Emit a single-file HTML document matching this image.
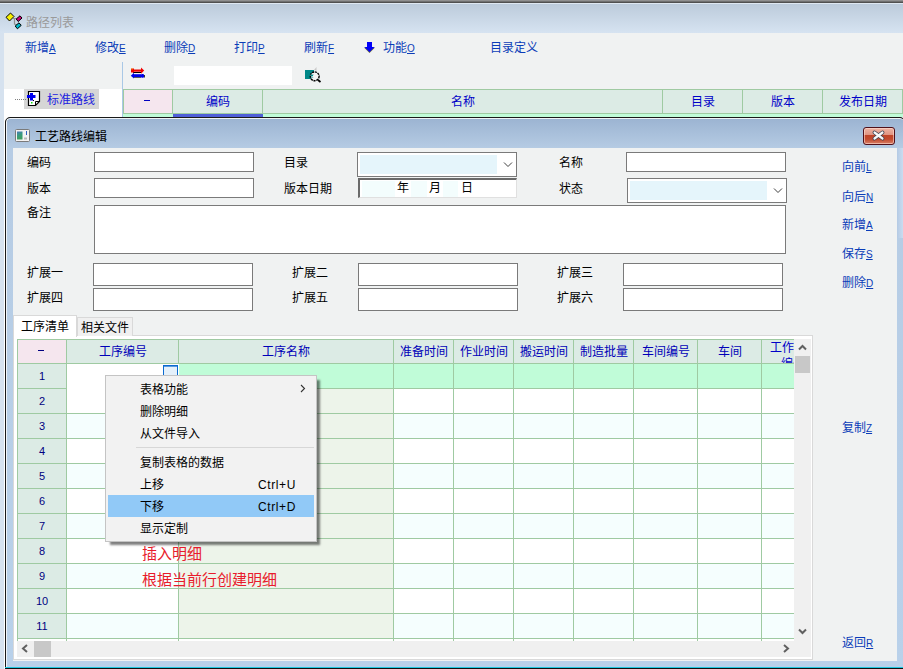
<!DOCTYPE html>
<html lang="zh-CN">
<head>
<meta charset="utf-8">
<style>
*{margin:0;padding:0;box-sizing:border-box}
html,body{width:903px;height:669px;overflow:hidden;background:#f0f2f2;font-family:"Liberation Sans",sans-serif;font-size:12px;line-height:12px;color:#000}
.a{position:absolute}
.t{position:absolute;white-space:nowrap;font-size:12px;line-height:16px}
.lk{color:#0a3cb8}
.u{text-decoration:underline;font-size:10px}
.inp{position:absolute;background:#fff;border:1px solid #7a7a7a}
.lbl{position:absolute;white-space:nowrap;font-size:12px;line-height:16px;color:#000}
.hd{position:absolute;background:#dcebe5;border-right:1px solid #9fcaa2;border-bottom:1px solid #9fcaa2;color:#0000c8;text-align:center;font-size:12px}
</style>
</head>
<body>
<!-- main window top border -->
<div class="a" style="left:0;top:0;width:903px;height:3px;background:linear-gradient(#a0a0a0,#404040)"></div>
<div class="a" style="left:0;top:3px;width:903px;height:1px;background:#dfe8f2"></div>
<div class="a" style="left:0;top:4px;width:903px;height:29px;background:linear-gradient(#bccbdb,#d6e3f1)"></div>
<div class="a" style="left:0;top:33px;width:4px;height:636px;background:#d6e2ef"></div>

<!-- title icon -->
<svg class="a" style="left:0;top:0" width="30" height="33" viewBox="0 0 30 33">
 <path d="M13 18.5 H17 M14.5 18.5 V24 L17 25" stroke="#909090" stroke-width="1.2" fill="none"/>
 <path d="M6 17.3 L10.5 13 L14 16.5 L9.5 21 Z" fill="#f8f000" stroke="#000" stroke-width="1"/>
 <path d="M16.2 19 L20 15.8 L22 18 L18.2 21.5 Z" fill="#d0007a" stroke="#000" stroke-width="1"/>
 <path d="M15.2 26 L19 22.8 L21.2 25.4 L17.4 28.8 Z" fill="#00b8c8" stroke="#000" stroke-width="1"/>
</svg>
<div class="t" style="left:26px;top:15px;color:#9a9a9a">路径列表</div>

<!-- toolbar -->
<div class="t lk" style="left:25px;top:40px">新增<span class="u">A</span></div>
<div class="t lk" style="left:95px;top:40px">修改<span class="u">E</span></div>
<div class="t lk" style="left:164px;top:40px">删除<span class="u">D</span></div>
<div class="t lk" style="left:234px;top:40px">打印<span class="u">P</span></div>
<div class="t lk" style="left:304px;top:40px">刷新<span class="u">F</span></div>
<svg class="a" style="left:360px;top:36px" width="16" height="18" viewBox="0 0 16 18">
 <path d="M7 6.5 H12 V11.5 H15 L9.5 17 L4 11.5 H7 Z" fill="#404020" opacity="0.8"/>
 <path d="M7 6 H12 V11 H14.5 L9.5 16 L4.5 11 H7 Z" fill="#0000f8"/>
</svg>
<div class="t lk" style="left:383px;top:40px">功能<span class="u">O</span></div>
<div class="t lk" style="left:490px;top:40px">目录定义</div>

<!-- left tree panel -->
<div class="a" style="left:4px;top:89px;width:118px;height:580px;background:#fff"></div>
<div class="a" style="left:122px;top:62px;width:1px;height:607px;background:#a9c8e6"></div>
<div class="a" style="left:24px;top:89px;width:75px;height:20px;background:#d6d6d6"></div>
<div class="a" style="left:15px;top:99px;width:12px;height:1px;background:repeating-linear-gradient(90deg,#808080 0 1px,transparent 1px 2px)"></div>
<svg class="a" style="left:0;top:0" width="50" height="110" viewBox="0 0 50 110">
 <path d="M28.5 91.5 H39.5 V101.5 L35.5 105.5 H28.5 Z" fill="#fff" stroke="#000" stroke-width="1.2"/>
 <path d="M35.5 105.5 V101.5 H39.5" fill="none" stroke="#000" stroke-width="1"/>
 <rect x="27" y="95" width="8.5" height="3" fill="#0000f0"/>
 <rect x="30" y="93" width="3" height="7.5" fill="#0000f0"/>
 <rect x="33" y="100" width="1" height="1" fill="#000"/>
 <rect x="31" y="102" width="1.5" height="1.5" fill="#10e010"/>
</svg>
<div class="t" style="left:47px;top:92px;color:#2020e0">标准路线</div>

<!-- grid toolbar -->
<svg class="a" style="left:126px;top:62px" width="24" height="22" viewBox="0 0 24 22">
 <rect x="7" y="10" width="8" height="1" fill="#000"/>
 <rect x="5" y="7.5" width="11" height="2.2" fill="#f00000"/>
 <path d="M15 5.5 L18.2 8.6 L15 11.8 Z" fill="#f00000"/>
 <rect x="5" y="6.5" width="3" height="4" fill="#f00000"/>
 <rect x="5.5" y="6.5" width="1" height="1" fill="#f0f000"/>
 <rect x="7" y="12.2" width="8" height="3" fill="#0000e8"/>
 <path d="M8 10.8 L4.8 13.7 L8 16.6 Z" fill="#0000e8"/>
 <rect x="15" y="12" width="3" height="3.8" rx="1" fill="#0000e8"/>
 <rect x="18" y="13" width="0.8" height="2.5" fill="#000"/>
 <rect x="8" y="15.2" width="7" height="0.8" fill="#404040"/>
</svg>
<div class="a" style="left:174px;top:66px;width:118px;height:19px;background:#fff"></div>
<svg class="a" style="left:300px;top:62px" width="26" height="24" viewBox="0 0 26 24">
 <rect x="5" y="8" width="9" height="9" fill="#008888"/>
 <path d="M14 8 L16.5 5 V9 Z" fill="#c8c8c8"/>
 <circle cx="14.7" cy="14.3" r="4.4" fill="#f4f4f4" stroke="#000" stroke-width="1.4" stroke-dasharray="2.2 0.7"/>
 <path d="M10.5 12.5 L13 15.5 M10.8 15.5 L13.2 12.5" stroke="#008c8c" stroke-width="1.1"/>
 <path d="M18 18 L20.5 20" stroke="#000" stroke-width="1.8"/>
</svg>

<!-- main grid header -->
<div class="a" style="left:123px;top:89px;width:780px;height:1px;background:#9fcaa2"></div>
<div class="hd" style="left:123px;top:90px;width:50px;height:24px;background:#f5e6ee;line-height:22px;border-left:1px solid #9fcaa2"></div>
<div class="a" style="left:144px;top:100px;width:6px;height:1px;background:#0000c0"></div>
<div class="hd" style="left:173px;top:90px;width:90px;height:24px;line-height:24px">编码</div>
<div class="hd" style="left:263px;top:90px;width:400px;height:24px;line-height:24px">名称</div>
<div class="hd" style="left:663px;top:90px;width:80px;height:24px;line-height:24px">目录</div>
<div class="hd" style="left:743px;top:90px;width:80px;height:24px;line-height:24px">版本</div>
<div class="hd" style="left:823px;top:90px;width:80px;height:24px;line-height:24px">发布日期</div>
<div class="a" style="left:123px;top:114px;width:780px;height:3px;background:#c0fcd8"></div>
<div class="a" style="left:173px;top:114px;width:90px;height:3px;background:#4f5fd8"></div>

<!-- dialog -->
<div class="a" style="left:5px;top:117px;width:900px;height:560px;border:1px solid #1a1a1a;border-top-left-radius:5px;border-top-right-radius:5px;overflow:hidden;background:#1a1a1a">
 <div style="position:absolute;left:0;top:0;right:0;bottom:0;border-top:1px solid #eef3f8;border-left:1px solid #eef3f8;border-top-left-radius:4px;border-top-right-radius:4px;background:linear-gradient(#9cb4d2,#b6cce4 30px,#b9d1ea)"></div>
</div>
<div class="a" style="left:5px;top:667px;width:898px;height:1px;background:#20c8e0"></div>
<div class="a" style="left:5px;top:668px;width:898px;height:1px;background:#101010"></div>
<!-- dialog icon -->
<svg class="a" style="left:15px;top:129px" width="15" height="13" viewBox="0 0 15 13">
 <defs><linearGradient id="gi" x1="0" y1="0" x2="0.3" y2="1"><stop offset="0" stop-color="#4a78c0"/><stop offset="0.5" stop-color="#3a9a80"/><stop offset="1" stop-color="#40a060"/></linearGradient></defs>
 <rect x="0.5" y="0.5" width="14" height="12" rx="1" fill="#f4f2f2" stroke="#7a7a7a"/>
 <rect x="2" y="2.5" width="5.5" height="8" fill="url(#gi)"/>
 <rect x="11" y="2" width="1" height="4" fill="#3060c0"/>
 <rect x="9" y="8.5" width="3" height="2" fill="#b8b8b8"/>
</svg>
<div class="t" style="left:35px;top:129px;color:#000">工艺路线编辑</div>
<!-- close btn -->
<div class="a" style="left:863px;top:127px;width:32px;height:18px;border:1px solid #50101a;border-radius:3px;background:linear-gradient(#eeb4a4 0%,#e09482 42%,#c04428 46%,#c24a2e 70%,#d88068 100%);box-shadow:inset 0 0 0 1px rgba(255,220,210,0.6)"></div>
<svg class="a" style="left:871px;top:129px" width="15" height="13" viewBox="0 0 15 13"><path d="M3.5 3.5 L11.5 9.5 M11.5 3.5 L3.5 9.5" stroke="#3a4050" stroke-width="3.8" stroke-linecap="round"/><path d="M3.5 3.5 L11.5 9.5 M11.5 3.5 L3.5 9.5" stroke="#f8f8f8" stroke-width="2.2" stroke-linecap="round"/></svg>

<div class="a" style="left:897px;top:148px;width:6px;height:90px;background:linear-gradient(90deg,#b4cae4,#cadcf0)"></div>
<!-- client area -->
<div class="a" style="left:13px;top:148px;width:884px;height:513px;background:#f0f2f2"></div>


<!-- form -->
<div class="lbl" style="left:27px;top:155px">编码</div>
<div class="inp" style="left:94px;top:152px;width:160px;height:20px"></div>
<div class="lbl" style="left:284px;top:155px">目录</div>
<div class="a" style="left:357px;top:152px;width:160px;height:25px;border:1px solid #7a7a7a;background:#fff"></div>
<div class="a" style="left:360px;top:155px;width:137px;height:19px;background:#e5f5fb"></div>
<svg class="a" style="left:503px;top:161px" width="10" height="7" viewBox="0 0 10 7"><path d="M1 1.5 L5 5.5 L9 1.5" stroke="#404040" stroke-width="1" fill="none"/></svg>
<div class="lbl" style="left:559px;top:155px">名称</div>
<div class="inp" style="left:626px;top:152px;width:160px;height:20px"></div>

<div class="lbl" style="left:27px;top:181px">版本</div>
<div class="inp" style="left:94px;top:178px;width:160px;height:20px"></div>
<div class="lbl" style="left:284px;top:181px">版本日期</div>
<div class="a" style="left:358px;top:178px;width:159px;height:20px;background:#fff;border-top:2px solid #6a6a6a;border-left:2px solid #6a6a6a;border-right:1px solid #e0e0e0;border-bottom:1px solid #e0e0e0"></div>
<div class="a" style="left:362px;top:181px;width:33px;height:16px;background:#f3fdfd"></div>
<div class="a" style="left:411px;top:181px;width:16px;height:16px;background:#f3fdfd"></div>
<div class="a" style="left:443px;top:181px;width:15px;height:16px;background:#f3fdfd"></div>
<div class="lbl" style="left:397px;top:180px">年</div>
<div class="lbl" style="left:429px;top:180px">月</div>
<div class="lbl" style="left:461px;top:180px">日</div>
<div class="lbl" style="left:559px;top:181px">状态</div>
<div class="a" style="left:627px;top:178px;width:160px;height:25px;border:1px solid #7a7a7a;background:#fff"></div>
<div class="a" style="left:630px;top:181px;width:137px;height:19px;background:#e5f5fb"></div>
<svg class="a" style="left:773px;top:187px" width="10" height="7" viewBox="0 0 10 7"><path d="M1 1.5 L5 5.5 L9 1.5" stroke="#404040" stroke-width="1" fill="none"/></svg>

<div class="lbl" style="left:27px;top:205px">备注</div>
<div class="inp" style="left:94px;top:205px;width:692px;height:49px"></div>

<div class="lbl" style="left:27px;top:265px">扩展一</div>
<div class="inp" style="left:93px;top:263px;width:160px;height:23px"></div>
<div class="lbl" style="left:292px;top:265px">扩展二</div>
<div class="inp" style="left:358px;top:263px;width:160px;height:23px"></div>
<div class="lbl" style="left:557px;top:265px">扩展三</div>
<div class="inp" style="left:623px;top:263px;width:160px;height:23px"></div>
<div class="lbl" style="left:27px;top:290px">扩展四</div>
<div class="inp" style="left:93px;top:288px;width:160px;height:23px"></div>
<div class="lbl" style="left:292px;top:290px">扩展五</div>
<div class="inp" style="left:358px;top:288px;width:160px;height:23px"></div>
<div class="lbl" style="left:557px;top:290px">扩展六</div>
<div class="inp" style="left:623px;top:288px;width:160px;height:23px"></div>

<!-- right buttons -->
<div class="t lk" style="left:842px;top:159px">向前<span class="u">L</span></div>
<div class="t lk" style="left:842px;top:189px">向后<span class="u">N</span></div>
<div class="t lk" style="left:842px;top:217px">新增<span class="u">A</span></div>
<div class="t lk" style="left:842px;top:246px">保存<span class="u">S</span></div>
<div class="t lk" style="left:842px;top:275px">删除<span class="u">D</span></div>
<div class="t lk" style="left:842px;top:420px">复制<span class="u">Z</span></div>
<div class="t lk" style="left:842px;top:635px">返回<span class="u">R</span></div>

<!-- tabs -->
<div class="a" style="left:13px;top:335px;width:800px;height:325px;background:#fff;border:1px solid #d9d9d9"></div>
<div class="a" style="left:77px;top:317px;width:56px;height:19px;background:#f0f0f0;border:1px solid #d9d9d9;border-bottom:none"></div>
<div class="a" style="left:13px;top:315px;width:64px;height:22px;background:#fff;border:1px solid #d9d9d9;border-bottom:none"></div>
<div class="lbl" style="left:21px;top:319px">工序清单</div>
<div class="lbl" style="left:81px;top:320px">相关文件</div>


<!-- grid -->
<div class="a" style="left:17px;top:339px;width:49px;height:24px;background:#f5e6ee"></div>
<div class="a" style="left:66px;top:339px;width:112px;height:24px;background:#dcebe5"></div>
<div class="a" style="left:178px;top:339px;width:215px;height:24px;background:#dcebe5"></div>
<div class="a" style="left:393px;top:339px;width:60px;height:24px;background:#dcebe5"></div>
<div class="a" style="left:453px;top:339px;width:60px;height:24px;background:#dcebe5"></div>
<div class="a" style="left:513px;top:339px;width:60px;height:24px;background:#dcebe5"></div>
<div class="a" style="left:573px;top:339px;width:60px;height:24px;background:#dcebe5"></div>
<div class="a" style="left:633px;top:339px;width:64px;height:24px;background:#dcebe5"></div>
<div class="a" style="left:697px;top:339px;width:64px;height:24px;background:#dcebe5"></div>
<div class="a" style="left:761px;top:339px;width:33px;height:24px;background:#dcebe5"></div>
<div class="a" style="left:17px;top:363px;width:49px;height:25px;background:#dcebe5"></div>
<div class="a" style="left:66px;top:363px;width:112px;height:25px;background:#ffffff"></div>
<div class="a" style="left:178px;top:363px;width:215px;height:25px;background:#c0fcd8"></div>
<div class="a" style="left:393px;top:363px;width:60px;height:25px;background:#c0fcd8"></div>
<div class="a" style="left:453px;top:363px;width:60px;height:25px;background:#c0fcd8"></div>
<div class="a" style="left:513px;top:363px;width:60px;height:25px;background:#c0fcd8"></div>
<div class="a" style="left:573px;top:363px;width:60px;height:25px;background:#c0fcd8"></div>
<div class="a" style="left:633px;top:363px;width:64px;height:25px;background:#c0fcd8"></div>
<div class="a" style="left:697px;top:363px;width:64px;height:25px;background:#c0fcd8"></div>
<div class="a" style="left:761px;top:363px;width:33px;height:25px;background:#c0fcd8"></div>
<div class="a" style="left:17px;top:388px;width:49px;height:25px;background:#dcebe5"></div>
<div class="a" style="left:66px;top:388px;width:112px;height:25px;background:#ffffff"></div>
<div class="a" style="left:178px;top:388px;width:215px;height:25px;background:#edf4ea"></div>
<div class="a" style="left:393px;top:388px;width:60px;height:25px;background:#ffffff"></div>
<div class="a" style="left:453px;top:388px;width:60px;height:25px;background:#ffffff"></div>
<div class="a" style="left:513px;top:388px;width:60px;height:25px;background:#ffffff"></div>
<div class="a" style="left:573px;top:388px;width:60px;height:25px;background:#ffffff"></div>
<div class="a" style="left:633px;top:388px;width:64px;height:25px;background:#ffffff"></div>
<div class="a" style="left:697px;top:388px;width:64px;height:25px;background:#ffffff"></div>
<div class="a" style="left:761px;top:388px;width:33px;height:25px;background:#ffffff"></div>
<div class="a" style="left:17px;top:413px;width:49px;height:25px;background:#dcebe5"></div>
<div class="a" style="left:66px;top:413px;width:112px;height:25px;background:#f5fefe"></div>
<div class="a" style="left:178px;top:413px;width:215px;height:25px;background:#edf4ea"></div>
<div class="a" style="left:393px;top:413px;width:60px;height:25px;background:#f5fefe"></div>
<div class="a" style="left:453px;top:413px;width:60px;height:25px;background:#f5fefe"></div>
<div class="a" style="left:513px;top:413px;width:60px;height:25px;background:#f5fefe"></div>
<div class="a" style="left:573px;top:413px;width:60px;height:25px;background:#f5fefe"></div>
<div class="a" style="left:633px;top:413px;width:64px;height:25px;background:#f5fefe"></div>
<div class="a" style="left:697px;top:413px;width:64px;height:25px;background:#f5fefe"></div>
<div class="a" style="left:761px;top:413px;width:33px;height:25px;background:#f5fefe"></div>
<div class="a" style="left:17px;top:438px;width:49px;height:25px;background:#dcebe5"></div>
<div class="a" style="left:66px;top:438px;width:112px;height:25px;background:#ffffff"></div>
<div class="a" style="left:178px;top:438px;width:215px;height:25px;background:#edf4ea"></div>
<div class="a" style="left:393px;top:438px;width:60px;height:25px;background:#ffffff"></div>
<div class="a" style="left:453px;top:438px;width:60px;height:25px;background:#ffffff"></div>
<div class="a" style="left:513px;top:438px;width:60px;height:25px;background:#ffffff"></div>
<div class="a" style="left:573px;top:438px;width:60px;height:25px;background:#ffffff"></div>
<div class="a" style="left:633px;top:438px;width:64px;height:25px;background:#ffffff"></div>
<div class="a" style="left:697px;top:438px;width:64px;height:25px;background:#ffffff"></div>
<div class="a" style="left:761px;top:438px;width:33px;height:25px;background:#ffffff"></div>
<div class="a" style="left:17px;top:463px;width:49px;height:25px;background:#dcebe5"></div>
<div class="a" style="left:66px;top:463px;width:112px;height:25px;background:#f5fefe"></div>
<div class="a" style="left:178px;top:463px;width:215px;height:25px;background:#edf4ea"></div>
<div class="a" style="left:393px;top:463px;width:60px;height:25px;background:#f5fefe"></div>
<div class="a" style="left:453px;top:463px;width:60px;height:25px;background:#f5fefe"></div>
<div class="a" style="left:513px;top:463px;width:60px;height:25px;background:#f5fefe"></div>
<div class="a" style="left:573px;top:463px;width:60px;height:25px;background:#f5fefe"></div>
<div class="a" style="left:633px;top:463px;width:64px;height:25px;background:#f5fefe"></div>
<div class="a" style="left:697px;top:463px;width:64px;height:25px;background:#f5fefe"></div>
<div class="a" style="left:761px;top:463px;width:33px;height:25px;background:#f5fefe"></div>
<div class="a" style="left:17px;top:488px;width:49px;height:25px;background:#dcebe5"></div>
<div class="a" style="left:66px;top:488px;width:112px;height:25px;background:#ffffff"></div>
<div class="a" style="left:178px;top:488px;width:215px;height:25px;background:#edf4ea"></div>
<div class="a" style="left:393px;top:488px;width:60px;height:25px;background:#ffffff"></div>
<div class="a" style="left:453px;top:488px;width:60px;height:25px;background:#ffffff"></div>
<div class="a" style="left:513px;top:488px;width:60px;height:25px;background:#ffffff"></div>
<div class="a" style="left:573px;top:488px;width:60px;height:25px;background:#ffffff"></div>
<div class="a" style="left:633px;top:488px;width:64px;height:25px;background:#ffffff"></div>
<div class="a" style="left:697px;top:488px;width:64px;height:25px;background:#ffffff"></div>
<div class="a" style="left:761px;top:488px;width:33px;height:25px;background:#ffffff"></div>
<div class="a" style="left:17px;top:513px;width:49px;height:25px;background:#dcebe5"></div>
<div class="a" style="left:66px;top:513px;width:112px;height:25px;background:#f5fefe"></div>
<div class="a" style="left:178px;top:513px;width:215px;height:25px;background:#edf4ea"></div>
<div class="a" style="left:393px;top:513px;width:60px;height:25px;background:#f5fefe"></div>
<div class="a" style="left:453px;top:513px;width:60px;height:25px;background:#f5fefe"></div>
<div class="a" style="left:513px;top:513px;width:60px;height:25px;background:#f5fefe"></div>
<div class="a" style="left:573px;top:513px;width:60px;height:25px;background:#f5fefe"></div>
<div class="a" style="left:633px;top:513px;width:64px;height:25px;background:#f5fefe"></div>
<div class="a" style="left:697px;top:513px;width:64px;height:25px;background:#f5fefe"></div>
<div class="a" style="left:761px;top:513px;width:33px;height:25px;background:#f5fefe"></div>
<div class="a" style="left:17px;top:538px;width:49px;height:25px;background:#dcebe5"></div>
<div class="a" style="left:66px;top:538px;width:112px;height:25px;background:#ffffff"></div>
<div class="a" style="left:178px;top:538px;width:215px;height:25px;background:#edf4ea"></div>
<div class="a" style="left:393px;top:538px;width:60px;height:25px;background:#ffffff"></div>
<div class="a" style="left:453px;top:538px;width:60px;height:25px;background:#ffffff"></div>
<div class="a" style="left:513px;top:538px;width:60px;height:25px;background:#ffffff"></div>
<div class="a" style="left:573px;top:538px;width:60px;height:25px;background:#ffffff"></div>
<div class="a" style="left:633px;top:538px;width:64px;height:25px;background:#ffffff"></div>
<div class="a" style="left:697px;top:538px;width:64px;height:25px;background:#ffffff"></div>
<div class="a" style="left:761px;top:538px;width:33px;height:25px;background:#ffffff"></div>
<div class="a" style="left:17px;top:563px;width:49px;height:25px;background:#dcebe5"></div>
<div class="a" style="left:66px;top:563px;width:112px;height:25px;background:#f5fefe"></div>
<div class="a" style="left:178px;top:563px;width:215px;height:25px;background:#edf4ea"></div>
<div class="a" style="left:393px;top:563px;width:60px;height:25px;background:#f5fefe"></div>
<div class="a" style="left:453px;top:563px;width:60px;height:25px;background:#f5fefe"></div>
<div class="a" style="left:513px;top:563px;width:60px;height:25px;background:#f5fefe"></div>
<div class="a" style="left:573px;top:563px;width:60px;height:25px;background:#f5fefe"></div>
<div class="a" style="left:633px;top:563px;width:64px;height:25px;background:#f5fefe"></div>
<div class="a" style="left:697px;top:563px;width:64px;height:25px;background:#f5fefe"></div>
<div class="a" style="left:761px;top:563px;width:33px;height:25px;background:#f5fefe"></div>
<div class="a" style="left:17px;top:588px;width:49px;height:25px;background:#dcebe5"></div>
<div class="a" style="left:66px;top:588px;width:112px;height:25px;background:#ffffff"></div>
<div class="a" style="left:178px;top:588px;width:215px;height:25px;background:#edf4ea"></div>
<div class="a" style="left:393px;top:588px;width:60px;height:25px;background:#ffffff"></div>
<div class="a" style="left:453px;top:588px;width:60px;height:25px;background:#ffffff"></div>
<div class="a" style="left:513px;top:588px;width:60px;height:25px;background:#ffffff"></div>
<div class="a" style="left:573px;top:588px;width:60px;height:25px;background:#ffffff"></div>
<div class="a" style="left:633px;top:588px;width:64px;height:25px;background:#ffffff"></div>
<div class="a" style="left:697px;top:588px;width:64px;height:25px;background:#ffffff"></div>
<div class="a" style="left:761px;top:588px;width:33px;height:25px;background:#ffffff"></div>
<div class="a" style="left:17px;top:613px;width:49px;height:25px;background:#dcebe5"></div>
<div class="a" style="left:66px;top:613px;width:112px;height:25px;background:#f5fefe"></div>
<div class="a" style="left:178px;top:613px;width:215px;height:25px;background:#edf4ea"></div>
<div class="a" style="left:393px;top:613px;width:60px;height:25px;background:#f5fefe"></div>
<div class="a" style="left:453px;top:613px;width:60px;height:25px;background:#f5fefe"></div>
<div class="a" style="left:513px;top:613px;width:60px;height:25px;background:#f5fefe"></div>
<div class="a" style="left:573px;top:613px;width:60px;height:25px;background:#f5fefe"></div>
<div class="a" style="left:633px;top:613px;width:64px;height:25px;background:#f5fefe"></div>
<div class="a" style="left:697px;top:613px;width:64px;height:25px;background:#f5fefe"></div>
<div class="a" style="left:761px;top:613px;width:33px;height:25px;background:#f5fefe"></div>
<div class="a" style="left:17px;top:339px;width:1px;height:302px;background:#9fcaa2"></div>
<div class="a" style="left:66px;top:339px;width:1px;height:302px;background:#9fcaa2"></div>
<div class="a" style="left:178px;top:339px;width:1px;height:302px;background:#9fcaa2"></div>
<div class="a" style="left:393px;top:339px;width:1px;height:302px;background:#9fcaa2"></div>
<div class="a" style="left:453px;top:339px;width:1px;height:302px;background:#9fcaa2"></div>
<div class="a" style="left:513px;top:339px;width:1px;height:302px;background:#9fcaa2"></div>
<div class="a" style="left:573px;top:339px;width:1px;height:302px;background:#9fcaa2"></div>
<div class="a" style="left:633px;top:339px;width:1px;height:302px;background:#9fcaa2"></div>
<div class="a" style="left:697px;top:339px;width:1px;height:302px;background:#9fcaa2"></div>
<div class="a" style="left:761px;top:339px;width:1px;height:302px;background:#9fcaa2"></div>
<div class="a" style="left:17px;top:339px;width:777px;height:1px;background:#9fcaa2"></div>
<div class="a" style="left:17px;top:363px;width:777px;height:1px;background:#9fcaa2"></div>
<div class="a" style="left:17px;top:388px;width:777px;height:1px;background:#9fcaa2"></div>
<div class="a" style="left:17px;top:413px;width:777px;height:1px;background:#9fcaa2"></div>
<div class="a" style="left:17px;top:438px;width:777px;height:1px;background:#9fcaa2"></div>
<div class="a" style="left:17px;top:463px;width:777px;height:1px;background:#9fcaa2"></div>
<div class="a" style="left:17px;top:488px;width:777px;height:1px;background:#9fcaa2"></div>
<div class="a" style="left:17px;top:513px;width:777px;height:1px;background:#9fcaa2"></div>
<div class="a" style="left:17px;top:538px;width:777px;height:1px;background:#9fcaa2"></div>
<div class="a" style="left:17px;top:563px;width:777px;height:1px;background:#9fcaa2"></div>
<div class="a" style="left:17px;top:588px;width:777px;height:1px;background:#9fcaa2"></div>
<div class="a" style="left:17px;top:613px;width:777px;height:1px;background:#9fcaa2"></div>
<div class="a" style="left:17px;top:638px;width:777px;height:1px;background:#9fcaa2"></div>
<div class="a" style="left:38px;top:350px;width:6px;height:1px;background:#000080"></div>
<div class="a" style="left:67px;top:344px;width:111px;line-height:16px;text-align:center;color:#0000b8;white-space:nowrap">工序编号</div>
<div class="a" style="left:179px;top:344px;width:214px;line-height:16px;text-align:center;color:#0000b8;white-space:nowrap">工序名称</div>
<div class="a" style="left:394px;top:344px;width:59px;line-height:16px;text-align:center;color:#0000b8;white-space:nowrap">准备时间</div>
<div class="a" style="left:454px;top:344px;width:59px;line-height:16px;text-align:center;color:#0000b8;white-space:nowrap">作业时间</div>
<div class="a" style="left:514px;top:344px;width:59px;line-height:16px;text-align:center;color:#0000b8;white-space:nowrap">搬运时间</div>
<div class="a" style="left:574px;top:344px;width:59px;line-height:16px;text-align:center;color:#0000b8;white-space:nowrap">制造批量</div>
<div class="a" style="left:634px;top:344px;width:63px;line-height:16px;text-align:center;color:#0000b8;white-space:nowrap">车间编号</div>
<div class="a" style="left:698px;top:344px;width:63px;line-height:16px;text-align:center;color:#0000b8;white-space:nowrap">车间</div>
<div class="a" style="left:762px;top:339px;width:32px;height:24px;overflow:hidden"><div style="position:absolute;left:8px;top:1px;color:#0000c8;line-height:16px;white-space:nowrap">工作</div><div style="position:absolute;left:19px;top:17px;color:#0000c8;line-height:16px;white-space:nowrap">编号</div></div>
<div class="a" style="left:18px;top:370px;width:48px;text-align:center;color:#000080;font-size:11px;line-height:13px">1</div>
<div class="a" style="left:18px;top:395px;width:48px;text-align:center;color:#000080;font-size:11px;line-height:13px">2</div>
<div class="a" style="left:18px;top:420px;width:48px;text-align:center;color:#000080;font-size:11px;line-height:13px">3</div>
<div class="a" style="left:18px;top:445px;width:48px;text-align:center;color:#000080;font-size:11px;line-height:13px">4</div>
<div class="a" style="left:18px;top:470px;width:48px;text-align:center;color:#000080;font-size:11px;line-height:13px">5</div>
<div class="a" style="left:18px;top:495px;width:48px;text-align:center;color:#000080;font-size:11px;line-height:13px">6</div>
<div class="a" style="left:18px;top:520px;width:48px;text-align:center;color:#000080;font-size:11px;line-height:13px">7</div>
<div class="a" style="left:18px;top:545px;width:48px;text-align:center;color:#000080;font-size:11px;line-height:13px">8</div>
<div class="a" style="left:18px;top:570px;width:48px;text-align:center;color:#000080;font-size:11px;line-height:13px">9</div>
<div class="a" style="left:18px;top:595px;width:48px;text-align:center;color:#000080;font-size:11px;line-height:13px">10</div>
<div class="a" style="left:18px;top:620px;width:48px;text-align:center;color:#000080;font-size:11px;line-height:13px">11</div>
<div class="a" style="left:178px;top:364px;width:1px;height:24px;background:#fff"></div>
<div class="a" style="left:67px;top:388px;width:111px;height:1px;background:#fff"></div>
<div class="a" style="left:163px;top:365px;width:15px;height:11px;background:#e4f0fa;border:1px solid #0a6ad0;border-bottom:none;box-shadow:inset 0 1px 0 #5a9ae0"></div>
<div class="a" style="left:794px;top:339px;width:17px;height:318px;background:#f0f0f0"></div>
<svg class="a" style="left:798px;top:344px" width="9" height="7" viewBox="0 0 9 7"><path d="M1 5.5 L4.5 2 L8 5.5" stroke="#606060" stroke-width="2" fill="none"/></svg>
<div class="a" style="left:795px;top:356px;width:15px;height:17px;background:#c8c8c8"></div>
<svg class="a" style="left:798px;top:628px" width="9" height="7" viewBox="0 0 9 7"><path d="M1 1.5 L4.5 5 L8 1.5" stroke="#606060" stroke-width="2" fill="none"/></svg>
<div class="a" style="left:17px;top:641px;width:794px;height:16px;background:#f0f0f0"></div>
<svg class="a" style="left:21px;top:644px" width="8" height="9" viewBox="0 0 8 9"><path d="M6 1 L2 4.5 L6 8" stroke="#606060" stroke-width="2" fill="none"/></svg>
<div class="a" style="left:34px;top:641px;width:17px;height:16px;background:#c8c8c8"></div>
<svg class="a" style="left:782px;top:644px" width="8" height="9" viewBox="0 0 8 9"><path d="M2 1 L6 4.5 L2 8" stroke="#606060" stroke-width="2" fill="none"/></svg>

<!-- context menu -->
<div class="a" style="left:142px;top:545px;color:#e81c2c;font-size:15px;line-height:17px;white-space:nowrap">插入明细</div>
<div class="a" style="left:142px;top:571px;color:#e81c2c;font-size:15px;line-height:17px;white-space:nowrap">根据当前行创建明细</div>
<div class="a" style="left:105px;top:375px;width:212px;height:167px;background:#f2f2f2;border:1px solid #c4c4c4;box-shadow:4px 4px 2px -1px rgba(0,0,0,0.5)"></div>
<div class="a" style="left:136px;top:447px;width:178px;height:1px;background:#d7d7d7"></div>
<div class="a" style="left:108px;top:495px;width:206px;height:22px;background:#91c9f7"></div>
<div class="t" style="left:140px;top:382px">表格功能</div>
<svg class="a" style="left:300px;top:384px" width="6" height="9" viewBox="0 0 6 9"><path d="M1 1 L4.5 4.5 L1 8" stroke="#333" stroke-width="1.1" fill="none"/></svg>
<div class="t" style="left:140px;top:404px">删除明细</div>
<div class="t" style="left:140px;top:426px">从文件导入</div>
<div class="t" style="left:140px;top:455px">复制表格的数据</div>
<div class="t" style="left:140px;top:477px">上移</div>
<div class="t" style="left:258px;top:477px;letter-spacing:0.6px">Ctrl+U</div>
<div class="t" style="left:140px;top:499px">下移</div>
<div class="t" style="left:258px;top:499px;letter-spacing:0.6px">Ctrl+D</div>
<div class="t" style="left:140px;top:521px">显示定制</div>

</body>
</html>
